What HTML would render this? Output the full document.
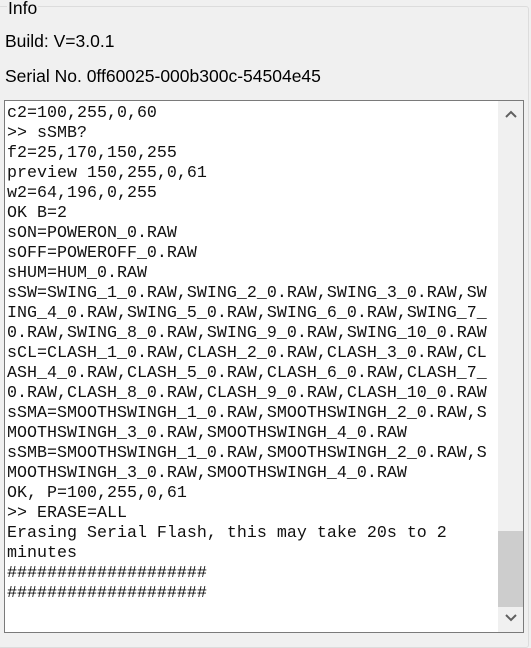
<!DOCTYPE html><html><head><style>
body{margin:0;width:531px;height:638px;background:#f0f0f0;position:relative;overflow:hidden;font-family:"Liberation Sans",sans-serif;}
.gb{position:absolute;left:-2px;top:6px;width:529px;height:640px;border:1px solid #dcdcdc;border-radius:3px}
.lg{position:absolute;left:8px;top:-9px;font-size:17.5px;color:#000;background:#f0f0f0;padding:0 1px}
.l{position:absolute;left:5px;font-size:17.5px;color:#000}
.ta{position:absolute;left:4px;top:100px;width:518px;height:531px;border:1px solid #7a7a7a;background:#fff;overflow:hidden}
pre{margin:0;position:absolute;left:2px;top:3px;font-family:"Liberation Mono",monospace;font-size:16.67px;line-height:20px;color:#111}
.sb{position:absolute;right:0;top:0;width:25px;height:531px;background:#f0f0f0}
.th{position:absolute;left:0;top:430px;width:25px;height:76px;background:#cdcdcd}
</style></head><body>
<div class="gb"><span class="lg">Info</span></div>
<div class="l" style="top:31px">Build: V=3.0.1</div>
<div class="l" style="top:66px">Serial No. 0ff60025-000b300c-54504e45</div>
<div class="ta"><pre>c2=100,255,0,60
&gt;&gt; sSMB?
f2=25,170,150,255
preview 150,255,0,61
w2=64,196,0,255
OK B=2
sON=POWERON_0.RAW
sOFF=POWEROFF_0.RAW
sHUM=HUM_0.RAW
sSW=SWING_1_0.RAW,SWING_2_0.RAW,SWING_3_0.RAW,SW
ING_4_0.RAW,SWING_5_0.RAW,SWING_6_0.RAW,SWING_7_
0.RAW,SWING_8_0.RAW,SWING_9_0.RAW,SWING_10_0.RAW
sCL=CLASH_1_0.RAW,CLASH_2_0.RAW,CLASH_3_0.RAW,CL
ASH_4_0.RAW,CLASH_5_0.RAW,CLASH_6_0.RAW,CLASH_7_
0.RAW,CLASH_8_0.RAW,CLASH_9_0.RAW,CLASH_10_0.RAW
sSMA=SMOOTHSWINGH_1_0.RAW,SMOOTHSWINGH_2_0.RAW,S
MOOTHSWINGH_3_0.RAW,SMOOTHSWINGH_4_0.RAW
sSMB=SMOOTHSWINGH_1_0.RAW,SMOOTHSWINGH_2_0.RAW,S
MOOTHSWINGH_3_0.RAW,SMOOTHSWINGH_4_0.RAW
OK, P=100,255,0,61
&gt;&gt; ERASE=ALL
Erasing Serial Flash, this may take 20s to 2
minutes
####################
####################</pre>
<div class="sb">
<svg style="position:absolute;left:7px;top:9px" width="12" height="8"><path d="M1 7L6 2L11 7" stroke="#606060" stroke-width="2" fill="none"/></svg>
<div class="th"></div>
<svg style="position:absolute;left:7px;top:513px" width="12" height="8"><path d="M1 1L6 6L11 1" stroke="#606060" stroke-width="2" fill="none"/></svg>
</div></div>
</body></html>
